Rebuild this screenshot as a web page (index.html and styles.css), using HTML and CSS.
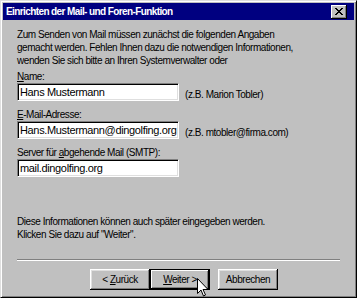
FILE: index.html
```html
<!DOCTYPE html>
<html lang="de">
<head>
<meta charset="utf-8">
<link rel="stylesheet" href="styles.css">
</head>
<body>
<div class="window">
  <div class="titlebar">
    <span class="title">Einrichten der Mail- und Foren-Funktion</span>
    <span class="close"><svg width="8" height="7" viewBox="0 0 8 7"><path d="M0 0h2v1h1v1h2V1h1V0h2v1H7v1H6v1H5v1h1v1h1v1h1v1H6V6H5V5H3v1H2v1H0V6h1V5h1V4h1V3H2V2H1V1H0z" fill="#000"/></svg></span>
  </div>
  <div class="content">
    <p class="intro">Zum Senden von Mail müssen zunächst die folgenden Angaben<br>gemacht werden. Fehlen Ihnen dazu die notwendigen Informationen,<br>wenden Sie sich bitte an Ihren Systemverwalter oder</p>
    <div class="field">
      <label><u>N</u>ame:</label>
      <div class="row"><div class="input">Hans Mustermann</div><span class="hint">(z.B. Marion Tobler)</span></div>
    </div>
    <div class="field">
      <label><u>E</u>-Mail-Adresse:</label>
      <div class="row"><div class="input">Hans.Mustermann@dingolfing.org</div><span class="hint">(z.B. mtobler@firma.com)</span></div>
    </div>
    <div class="field">
      <label>Server für <u>a</u>bgehende Mail (SMTP):</label>
      <div class="row"><div class="input">mail.dingolfing.org</div></div>
    </div>
    <p class="note">Diese Informationen können auch später eingegeben werden.<br>Klicken Sie dazu auf "Weiter".</p>
    <div class="sep"></div>
    <div class="buttons">
      <span class="btn"><span>&lt; <u>Z</u>urück</span></span>
      <span class="btn default"><span><u>W</u>eiter &gt;</span></span>
      <span class="btn gap"><span>Abbrechen</span></span>
    </div>
  </div>
  <svg class="cursor" width="12" height="19" viewBox="0 0 12 19"><path d="M0.5 0.5v15l3.5-3.5 2.5 6 2-1-2.5-5.5h5z" fill="#fff" stroke="#000" stroke-width="1"/></svg>
</div>
</body>
</html>
```
FILE: styles.css
```css
* { box-sizing: border-box; }
html, body { margin: 0; padding: 0; background: #fff; }
body { font-family: "Liberation Sans", Arial, sans-serif; font-size: 10px; letter-spacing: -0.45px; color: #000; }
.window {
  position: relative;
  width: 357px;
  height: 298px;
  background: #c0c0c0;
  border-top: 1px solid #dfdfdf;
  border-left: 1px solid #dfdfdf;
  border-right: 1px solid #000;
  border-bottom: 1px solid #000;
  box-shadow: inset 1px 1px 0 #fff, inset -1px -1px 0 #808080;
  padding: 2px;
  display: flex;
  flex-direction: column;
}
.titlebar {
  height: 17px;
  background: #000080;
  display: flex;
  align-items: center;
  justify-content: space-between;
  padding: 0 7px 0 3px;
}
.title { color: #fff; font-weight: bold; font-size: 10px; letter-spacing: -0.6px; }
.close {
  width: 16px; height: 14px;
  background: #c0c0c0;
  box-shadow: inset -1px -1px 0 #000, inset 1px 1px 0 #fff, inset -2px -2px 0 #808080;
  display: flex; align-items: center; justify-content: center;
}
.content { flex: 1; padding: 8px 14px 0 14px; display: flex; flex-direction: column; }
.intro { margin: 0; line-height: 13px; }
.field { margin-top: 7px; display: flex; flex-direction: column; }
.intro + .field { margin-top: 3px; }
.field label { line-height: 13px; height: 13px; }
.row { display: flex; align-items: center; gap: 6px; }
.input {
  width: 162px; height: 18px;
  background: #fff;
  border-top: 1px solid #808080; border-left: 1px solid #808080;
  border-right: 1px solid #fff; border-bottom: 1px solid #fff;
  box-shadow: inset 1px 1px 0 #000, inset -1px -1px 0 #dfdfdf;
  font-size: 11px; letter-spacing: -0.35px; line-height: 16px; padding: 0 2px;
  white-space: nowrap; overflow: hidden;
}
.hint { margin-top: 5px; }
.note { margin: 38px 0 0; line-height: 13px; }
.sep { margin-top: 18px; height: 2px; border-top: 1px solid #808080; border-bottom: 1px solid #fff; }
.buttons { display: flex; padding-left: 73px; margin-top: 8px; }
.btn {
  width: 60px; height: 21px;
  display: flex; align-items: center; justify-content: center;
  background: #c0c0c0;
  box-shadow: inset -1px -1px 0 #000, inset 1px 1px 0 #fff, inset -2px -2px 0 #808080, inset 2px 2px 0 #dfdfdf;
}
.btn.default { border: 1px solid #000; box-shadow: inset -1px -1px 0 #000, inset 1px 1px 0 #fff, inset -2px -2px 0 #808080; }
.btn.gap { margin-left: 8px; }
.cursor { position: absolute; left: 196px; top: 277px; }
```
